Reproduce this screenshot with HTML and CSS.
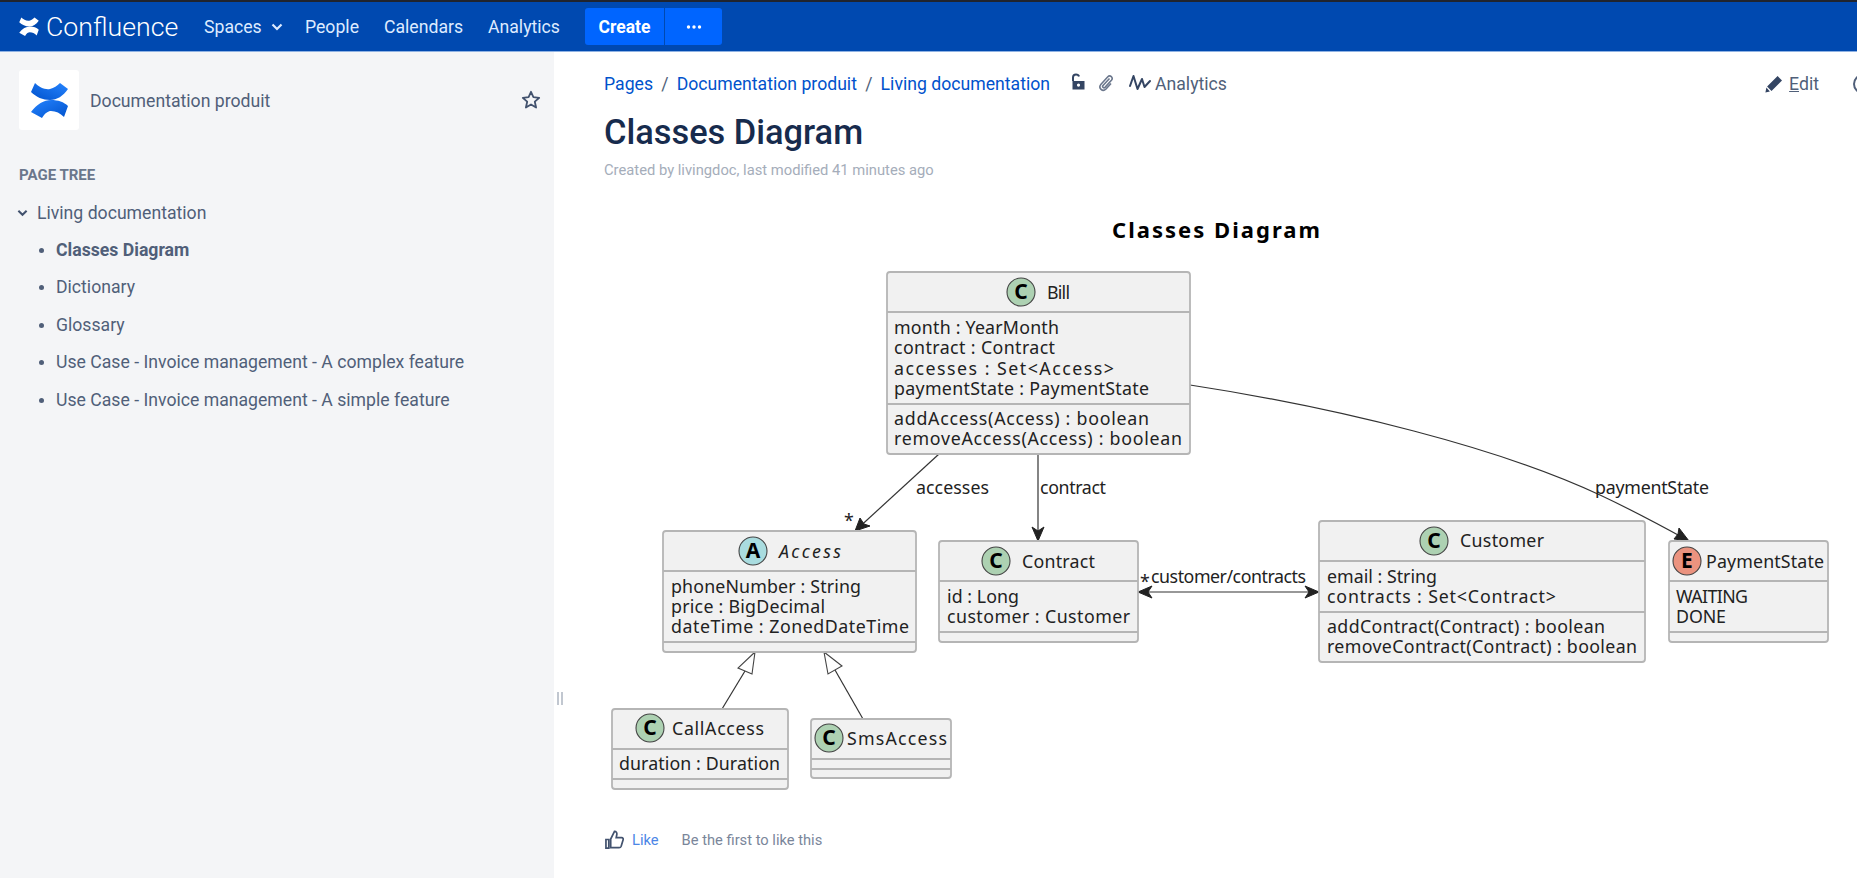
FILE: index.html
```html
<!DOCTYPE html>
<html lang="en">
<head>
  <meta charset="UTF-8" />
  <title>Classes Diagram - Documentation produit</title>
  <link rel="stylesheet" href="styles.css">
</head>
<body>
  <header class="topbar">
    <a class="brand">
      <svg class="brand-logo" viewBox="0 0 37 36"><path d="M4 1C8 5 14 8 19 7C23 6 26 4 29 1L37 7C32 14 26 18 19 18C12 18 5 15 0 10Z"/><path d="M0 30C6 22 13 18 20 18C27 18 33 20 37 24L33 35C29 31 25 29 20 29C17 29 14 31 11 36Z"/></svg>
      <span>Confluence</span>
    </a>
    <nav class="topnav">
      <a class="nav-spaces">Spaces
        <svg class="nav-chevron" viewBox="0 0 12 8"><path d="M1.5 1.5L6 6L10.5 1.5"/></svg>
      </a>
      <a class="nav-people">People</a>
      <a class="nav-calendars">Calendars</a>
      <a class="nav-analytics">Analytics</a>
    </nav>
    <div class="create-group">
      <button class="create-btn">Create</button>
      <button class="more-btn"><svg viewBox="0 0 16 4"><circle cx="2.5" cy="2" r="1.7"/><circle cx="8" cy="2" r="1.7"/><circle cx="13.5" cy="2" r="1.7"/></svg></button>
    </div>
  </header>

  <div class="layout">
    <aside class="sidebar">
      <div class="space-head">
        <div class="space-logo">
          <svg viewBox="0 0 37 36">
            <defs>
              <linearGradient id="logoTop" x1="1" y1="0" x2="0" y2="1"><stop offset="0" stop-color="#2684ff"/><stop offset="1" stop-color="#0052cc"/></linearGradient>
              <linearGradient id="logoBottom" x1="0" y1="0" x2="1" y2="1"><stop offset="0" stop-color="#2684ff"/><stop offset="1" stop-color="#0052cc"/></linearGradient>
            </defs>
            <path fill="url(#logoTop)" d="M4 1C8 5 14 8 19 7C23 6 26 4 29 1L37 7C32 14 26 18 19 18C12 18 5 15 0 10Z"/>
            <path fill="url(#logoBottom)" d="M0 30C6 22 13 18 20 18C27 18 33 20 37 24L33 35C29 31 25 29 20 29C17 29 14 31 11 36Z"/>
          </svg>
        </div>
        <span class="space-name">Documentation produit</span>
        <svg class="star" viewBox="0 0 20 20"><path d="M10 1.8L12.4 7.2L18.2 7.8L13.8 11.7L15.1 17.5L10 14.5L4.9 17.5L6.2 11.7L1.8 7.8L7.6 7.2Z"/></svg>
      </div>

      <h4 class="tree-title">PAGE TREE</h4>
      <div class="tree-root">
        <svg class="tree-chevron" viewBox="0 0 12 8"><path d="M1.5 1.5L6 6L10.5 1.5"/></svg>
        Living documentation
      </div>
      <ul class="tree">
        <li class="current">Classes Diagram</li>
        <li>Dictionary</li>
        <li>Glossary</li>
        <li>Use Case - Invoice management - A complex feature</li>
        <li>Use Case - Invoice management - A simple feature</li>
      </ul>
    </aside>

    <main class="content">
      <div class="splitter"><i></i><i></i></div>

      <div class="page-bar">
        <a class="crumb">Pages</a><span class="crumb-sep">/</span>
        <a class="crumb">Documentation produit</a><span class="crumb-sep">/</span>
        <a class="crumb">Living documentation</a>
        <svg class="ico-lock" viewBox="0 0 16 18"><path class="lock-shackle" d="M3 8V4.5C3 2.5 4.2 1.5 6 1.5C7.6 1.5 8.6 2.2 9 3.6"/><path class="lock-body" fill-rule="evenodd" d="M2.5 8H14.5V16.5H2.5ZM8.5 10.5A1.6 1.6 0 1 0 8.5 13.7A1.6 1.6 0 1 0 8.5 10.5Z"/></svg>
        <svg class="ico-clip" viewBox="0 0 16 18"><path d="M11.5 4.5L5 11.5C3.8 13 5.8 14.6 7 13.4L13.4 6.3C15.6 3.6 12.2 0.4 9.6 3L3 10.2C-0.2 14 4.6 18.4 8 15L13 9.5"/></svg>
        <a class="analytics-link">
          <svg class="ico-pulse" viewBox="0 0 22 18"><path d="M1 12L4.5 2L8.5 15L13 5L15.5 13L21 7"/></svg>
          Analytics
        </a>
        <div class="page-actions">
          <a class="edit-link">
            <svg class="ico-pencil" viewBox="0 0 18 18"><path d="M12.6 1L17 5.4L6.5 15.9L2.1 11.5ZM1.4 12.6L4.9 16.6L0.4 17.6Z"/></svg>
            <span><u>E</u>dit</span>
          </a>
          <span class="watch-ring"></span>
        </div>
      </div>

      <h1 class="page-title">Classes Diagram</h1>
      <p class="byline">Created by livingdoc, last modified 41 minutes ago</p>

      <svg class="diagram" viewBox="554 215 1303 585">
        <text class="uml-title" x="1112" y="238" textLength="208">Classes Diagram</text>

        <!-- links -->
        <path class="link" d="M939 454L855 531"/>
        <path class="head" d="M855 531L860 518L864 524L870 526Z"/>
        <text class="uml-text" x="849" y="527" text-anchor="middle">*</text>
        <text class="uml-text" x="916" y="494" textLength="73">accesses</text>

        <path class="link" d="M1038 454V541"/>
        <path class="head" d="M1038 541L1032 527L1038 531L1044 527Z"/>
        <text class="uml-text" x="1040" y="494" textLength="66">contract</text>

        <path class="link" d="M1190 385C1340 408 1500 448 1600 495C1632 510 1660 525 1689 541"/>
        <path class="head" d="M1689 541L1674 539L1678 534L1679 528Z"/>
        <text class="uml-text" x="1595" y="494" textLength="114">paymentState</text>

        <path class="link" d="M1138 592H1319"/>
        <path class="head" d="M1138 592L1152 586L1148 592L1152 598Z"/>
        <path class="head" d="M1319 592L1305 586L1309 592L1305 598Z"/>
        <text class="uml-text" x="1140" y="588">*</text>
        <text class="uml-text" x="1151" y="583" textLength="155">customer/contracts</text>

        <path class="link" d="M745 671L722 709"/>
        <path class="arrow-open" d="M755 652L738 668L752 674Z"/>
        <path class="link" d="M835 670L863 719"/>
        <path class="arrow-open" d="M824 652L842 666L828 674Z"/>

        <!-- Bill -->
        <rect class="box" x="887" y="272" width="303" height="182" rx="3"/>
        <path class="sep" d="M887 312H1190M887 404H1190"/>
        <circle class="spot spot-c" cx="1021" cy="292" r="14"/>
        <text class="spot-letter" x="1021" y="299">C</text>
        <text class="uml-text" x="1047" y="299" textLength="23">Bill</text>
        <text class="uml-text" x="894" y="334" textLength="165">month : YearMonth</text>
        <text class="uml-text" x="894" y="354" textLength="161">contract : Contract</text>
        <text class="uml-text" x="894" y="375" textLength="220">accesses : Set&lt;Access&gt;</text>
        <text class="uml-text" x="894" y="395" textLength="255">paymentState : PaymentState</text>
        <text class="uml-text" x="894" y="425" textLength="255">addAccess(Access) : boolean</text>
        <text class="uml-text" x="894" y="445" textLength="288">removeAccess(Access) : boolean</text>

        <!-- Access -->
        <rect class="box" x="663" y="531" width="253" height="121" rx="3"/>
        <path class="sep" d="M663 571H916M663 642H916"/>
        <circle class="spot spot-a" cx="753" cy="551" r="14"/>
        <text class="spot-letter" x="753" y="558">A</text>
        <text class="uml-text uml-italic" x="779" y="558" textLength="62">Access</text>
        <text class="uml-text" x="671" y="593" textLength="190">phoneNumber : String</text>
        <text class="uml-text" x="671" y="613" textLength="154">price : BigDecimal</text>
        <text class="uml-text" x="671" y="633" textLength="238">dateTime : ZonedDateTime</text>

        <!-- CallAccess -->
        <rect class="box" x="612" y="709" width="176" height="80" rx="3"/>
        <path class="sep" d="M612 749H788M612 779H788"/>
        <circle class="spot spot-c" cx="650" cy="728" r="14"/>
        <text class="spot-letter" x="650" y="735">C</text>
        <text class="uml-text" x="672" y="735" textLength="92">CallAccess</text>
        <text class="uml-text" x="619" y="770" textLength="161">duration : Duration</text>

        <!-- SmsAccess -->
        <rect class="box" x="811" y="719" width="140" height="59" rx="3"/>
        <path class="sep" d="M811 759H951M811 769H951"/>
        <circle class="spot spot-c" cx="829" cy="738" r="14"/>
        <text class="spot-letter" x="829" y="745">C</text>
        <text class="uml-text" x="847" y="745" textLength="100">SmsAccess</text>

        <!-- Contract -->
        <rect class="box" x="939" y="541" width="199" height="101" rx="3"/>
        <path class="sep" d="M939 581H1138M939 632H1138"/>
        <circle class="spot spot-c" cx="996" cy="561" r="14"/>
        <text class="spot-letter" x="996" y="568">C</text>
        <text class="uml-text" x="1022" y="568" textLength="73">Contract</text>
        <text class="uml-text" x="947" y="603" textLength="72">id : Long</text>
        <text class="uml-text" x="947" y="623" textLength="183">customer : Customer</text>

        <!-- Customer -->
        <rect class="box" x="1319" y="521" width="326" height="141" rx="3"/>
        <path class="sep" d="M1319 561H1645M1319 612H1645"/>
        <circle class="spot spot-c" cx="1434" cy="541" r="14"/>
        <text class="spot-letter" x="1434" y="548">C</text>
        <text class="uml-text" x="1460" y="547" textLength="84">Customer</text>
        <text class="uml-text" x="1327" y="583" textLength="110">email : String</text>
        <text class="uml-text" x="1327" y="603" textLength="229">contracts : Set&lt;Contract&gt;</text>
        <text class="uml-text" x="1327" y="633" textLength="278">addContract(Contract) : boolean</text>
        <text class="uml-text" x="1327" y="653" textLength="310">removeContract(Contract) : boolean</text>

        <!-- PaymentState -->
        <rect class="box" x="1669" y="541" width="159" height="101" rx="3"/>
        <path class="sep" d="M1669 581H1828M1669 632H1828"/>
        <circle class="spot spot-e" cx="1687" cy="561" r="14"/>
        <text class="spot-letter" x="1687" y="568">E</text>
        <text class="uml-text" x="1706" y="568" textLength="118">PaymentState</text>
        <text class="uml-text" x="1676" y="603" textLength="72">WAITING</text>
        <text class="uml-text" x="1676" y="623" textLength="50">DONE</text>
      </svg>

      <div class="like-row">
        <svg class="ico-thumb" viewBox="0 0 20 20"><path d="M1 10H4V19H1ZM6 18.5V9.5L10 1.5C12 1.5 12.8 3 12.4 5L11.8 8H17.5C19 8 19.4 9.4 19 10.5L17 17C16.6 18.2 16 18.6 14.8 18.6Z"/></svg>
        <a class="like-link">Like</a>
        <span class="like-note">Be the first to like this</span>
      </div>
    </main>
  </div>
</body>
</html>
```

FILE: styles.css
```css
* {
  box-sizing: border-box;
}
html, body {
  height: 100%;
}
body {
  margin: 0;
  overflow: hidden;
  background: white;
  font-family: 'Roboto', 'Liberation Sans', sans-serif;
  font-size: 17.65px;
  color: #505f79;
}

/* top bar */
.topbar {
  height: 52px;
  display: flex;
  align-items: center;
  padding-left: 19px;
  background: #0049b0;
  border-top: 2px solid #20242e;
  border-bottom: 1px solid #8fb2e3;
}
.brand {
  display: flex;
  align-items: center;
  gap: 7px;
  width: 185px;
  color: white;
  font-size: 26.7px;
  font-weight: 300;
}
.brand-logo {
  width: 20px;
  height: 19px;
  fill: white;
}
.topnav {
  display: flex;
  align-items: center;
  color: #deebff;
}
.nav-spaces {
  display: flex;
  align-items: center;
  gap: 9px;
  width: 101px;
}
.nav-chevron {
  width: 12px;
  height: 8px;
  fill: none;
  stroke: #deebff;
  stroke-width: 2.2;
}
.nav-people {
  width: 79px;
}
.nav-calendars {
  width: 104px;
}
.nav-analytics {
  width: 97px;
}
.create-group {
  display: flex;
  height: 37px;
  width: 137px;
  border-radius: 3px;
  overflow: hidden;
}
.create-group button {
  border: none;
  background: #0065ff;
  color: white;
  font: 700 17.5px 'Roboto', sans-serif;
  padding: 0;
}
.create-btn {
  width: 80px;
  border-right: 1px solid #0049b0 !important;
}
.more-btn {
  flex: 1;
}
.more-btn svg {
  width: 16px;
  height: 4px;
  fill: white;
  display: block;
  margin: 0 auto;
}

/* layout */
.layout {
  display: flex;
  height: calc(100vh - 52px);
}
.sidebar {
  width: 554px;
  flex-shrink: 0;
  background: #f4f5f7;
  padding: 18px 13px 0 19px;
}
.space-head {
  display: flex;
  align-items: center;
  gap: 11px;
}
.space-logo {
  width: 60px;
  height: 60px;
  background: white;
  border-radius: 3px;
  display: flex;
  align-items: center;
  justify-content: center;
}
.space-logo svg {
  width: 37px;
  height: 36px;
}
.space-name {
  flex: 1;
  padding-top: 2px;
}
.star {
  width: 20px;
  height: 20px;
  fill: none;
  stroke: #42526e;
  stroke-width: 1.8;
  stroke-linejoin: round;
}
.tree-title {
  margin: 35px 0 0;
  font-size: 15px;
  line-height: 20px;
  font-weight: 700;
  color: #6b778c;
}
.tree-root {
  display: flex;
  align-items: center;
  gap: 9px;
  margin: 9px 0 0 -2px;
  height: 37px;
  color: #505f79;
}
.tree-chevron {
  width: 11px;
  height: 8px;
  fill: none;
  stroke: #42526e;
  stroke-width: 2.2;
}
.tree {
  list-style: none;
  margin: 1px 0 0;
  padding: 0 0 0 37px;
}
.tree li {
  position: relative;
  line-height: 37.4px;
}
.tree li::before {
  content: "";
  position: absolute;
  left: -17px;
  top: 16px;
  width: 5px;
  height: 5px;
  border-radius: 50%;
  background: #505f79;
}
.tree .current {
  font-weight: 700;
}

/* page */
.content {
  flex: 1;
  min-width: 0;
  position: relative;
}
.splitter {
  position: absolute;
  left: 3px;
  top: 640px;
  display: flex;
  gap: 2px;
}
.splitter i {
  width: 2px;
  height: 13px;
  background: #c1c7d0;
}
.page-bar {
  display: flex;
  align-items: center;
  height: 24px;
  margin-top: 20px;
  padding: 0 0 0 50px;
}
.crumb {
  color: #0052cc;
}
.crumb-sep {
  margin: 0 8.2px;
  color: #505f79;
}
.page-bar svg {
  flex-shrink: 0;
}
.ico-lock {
  width: 16px;
  height: 18px;
  margin: -4px 0 0 20px;
}
.lock-shackle {
  fill: none;
  stroke: #344563;
  stroke-width: 2;
}
.lock-body {
  fill: #344563;
}
.ico-clip {
  width: 16px;
  height: 18px;
  margin: -2px 0 0 12px;
  fill: none;
  stroke: #6b778c;
  stroke-width: 1.6;
}
.analytics-link {
  display: flex;
  align-items: center;
  gap: 4px;
  margin-left: 15px;
}
.ico-pulse {
  width: 22px;
  height: 18px;
  margin-top: -3px;
  fill: none;
  stroke: #344563;
  stroke-width: 2;
  stroke-linecap: round;
  stroke-linejoin: round;
}
.page-actions {
  display: flex;
  align-items: center;
  margin-left: auto;
}
.edit-link {
  display: flex;
  align-items: center;
  gap: 6px;
}
.ico-pencil {
  width: 18px;
  height: 18px;
  fill: #344563;
}
.watch-ring {
  width: 20px;
  height: 20px;
  margin: 0 -16px 0 34px;
  border: 2.5px solid #505f79;
  border-radius: 50%;
}
.page-title {
  margin: 15px 0 0;
  padding-left: 50px;
  font-size: 34.4px;
  line-height: 42px;
  font-weight: 500;
  color: #172b4d;
}
.byline {
  margin: 7px 0 0;
  padding-left: 50px;
  font-size: 14.75px;
  line-height: 20px;
  color: #a5adba;
}
.like-row {
  display: flex;
  align-items: center;
  gap: 8px;
  padding-left: 51px;
  margin-top: 30px;
  font-size: 14.7px;
}
.ico-thumb {
  width: 19px;
  height: 19px;
  fill: none;
  stroke: #42526e;
  stroke-width: 1.8;
}
.like-link {
  color: #4c86e6;
}
.like-note {
  margin-left: 15px;
  color: #7a869a;
}

/* plantuml picture */
.diagram {
  display: block;
  width: 1303px;
  height: 585px;
  margin-top: 35px;
}
.diagram text {
  font-family: 'Noto Sans', 'Open Sans', sans-serif;
}
.uml-title {
  font-size: 22px;
  font-weight: 700;
  fill: black;
}
.uml-text {
  font-size: 17.8px;
  fill: #222;
}
.uml-italic {
  font-style: italic;
}
.box {
  fill: #f1f1f1;
  stroke: #b5b5b5;
  stroke-width: 1.8;
}
.sep {
  fill: none;
  stroke: #b5b5b5;
  stroke-width: 1.8;
}
.link {
  fill: none;
  stroke: #333;
  stroke-width: 1.2;
}
.head {
  fill: #222;
  stroke: #222;
  stroke-width: 1;
}
.arrow-open {
  fill: white;
  stroke: #444;
  stroke-width: 1.1;
}
.spot {
  stroke: #444;
  stroke-width: 1.1;
}
.spot-c {
  fill: #add1b2;
}
.spot-a {
  fill: #a9dcdf;
}
.spot-e {
  fill: #eb937f;
}
.spot-letter {
  font-size: 21px;
  font-weight: 700;
  text-anchor: middle;
  fill: black;
}
```
